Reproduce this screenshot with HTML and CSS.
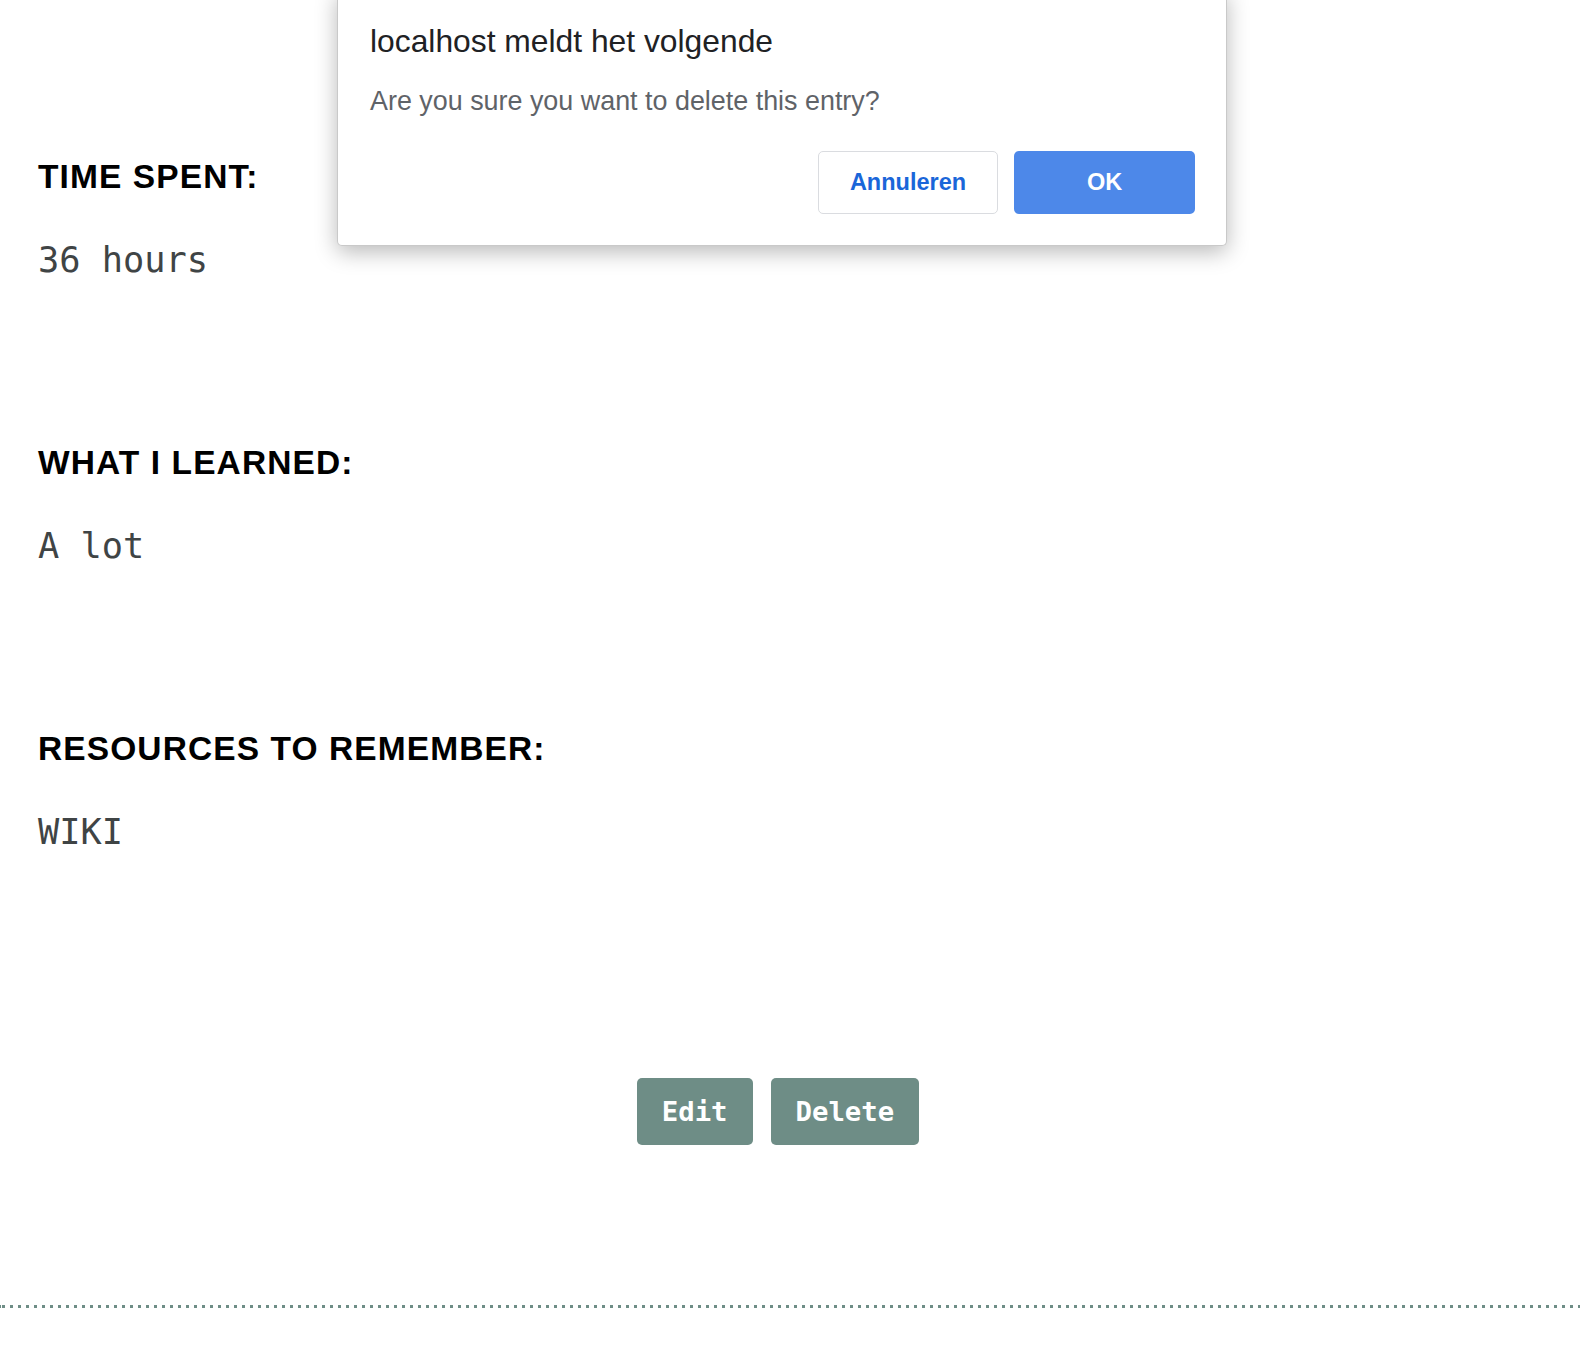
FILE: index.html
```html
<!DOCTYPE html>
<html>
<head>
<meta charset="utf-8">
<link rel="stylesheet" href="styles.css">
</head>
<body>
<main class="page">
  <section class="entry">
    <h2 class="label">TIME SPENT:</h2>
    <p class="value">36 hours</p>
  </section>
  <section class="entry">
    <h2 class="label">WHAT I LEARNED:</h2>
    <p class="value">A lot</p>
  </section>
  <section class="entry">
    <h2 class="label">RESOURCES TO REMEMBER:</h2>
    <p class="value">WIKI</p>
  </section>
  <div class="actions">
    <button class="btn">Edit</button>
    <button class="btn">Delete</button>
  </div>
  <div class="divider"></div>
</main>

<div class="dialog">
  <div class="dialog-title">localhost meldt het volgende</div>
  <div class="dialog-msg">Are you sure you want to delete this entry?</div>
  <div class="dialog-buttons">
    <button class="dbtn cancel">Annuleren</button>
    <button class="dbtn ok">OK</button>
  </div>
</div>
</body>
</html>
```

FILE: styles.css
```css
html, body {
  margin: 0;
  padding: 0;
  background: #ffffff;
}

.page {
  padding-top: 157px;
  display: flex;
  flex-direction: column;
}

.entry {
  padding-left: 38px;
  margin-bottom: 162.8px;
}

.label {
  margin: 0;
  font-family: "Liberation Sans", Arial, sans-serif;
  font-weight: 700;
  font-size: 33.5px;
  line-height: 40px;
  letter-spacing: 1.1px;
  color: #000;
}

.value {
  margin: 43.2px 0 0 0;
  font-family: "DejaVu Sans Mono", "Liberation Mono", monospace;
  font-size: 35.3px;
  line-height: 40px;
  color: #3f4445;
}

.entry:last-of-type {
  margin-bottom: 226px;
}

.actions {
  display: flex;
  justify-content: center;
  gap: 18px;
  padding-right: 24px;
}

.btn {
  height: 67px;
  padding: 0 25px;
  border: none;
  border-radius: 5px;
  background: #6e8d86;
  color: #ffffff;
  font-family: "DejaVu Sans Mono", "Liberation Mono", monospace;
  font-weight: 700;
  font-size: 27.3px;
}

.divider {
  margin-top: 160px;
  height: 3px;
  background: repeating-linear-gradient(to right, #6e8d86 0 3px, transparent 3px 8px);
  background-position: 2px 0;
}

.dialog {
  position: absolute;
  left: 337px;
  top: -10px;
  width: 890px;
  height: 256px;
  box-sizing: border-box;
  background: #ffffff;
  border-radius: 0 0 5px 5px;
  border: 1px solid #c9c9c9;
  border-top: none;
  box-shadow: 0 6px 22px rgba(0, 0, 0, 0.28);
  padding: 0 31px 0 32px;
  font-family: "Liberation Sans", Arial, sans-serif;
}

.dialog-title {
  margin-top: 32px;
  font-size: 31.8px;
  line-height: 38px;
  color: #202124;
}

.dialog-msg {
  margin-top: 24.7px;
  font-size: 26.9px;
  line-height: 32px;
  color: #5f6368;
}

.dialog-buttons {
  margin-top: 34.3px;
  display: flex;
  justify-content: flex-end;
  gap: 16px;
}

.dbtn {
  width: 181px;
  height: 63px;
  border-radius: 5px;
  font-family: "Liberation Sans", Arial, sans-serif;
  font-size: 23.5px;
  font-weight: 700;
}

.cancel {
  width: 180px;
  background: #ffffff;
  border: 1px solid #dadce0;
  color: #1a66d9;
}

.ok {
  background: #4d88e9;
  border: none;
  color: #ffffff;
}
```
